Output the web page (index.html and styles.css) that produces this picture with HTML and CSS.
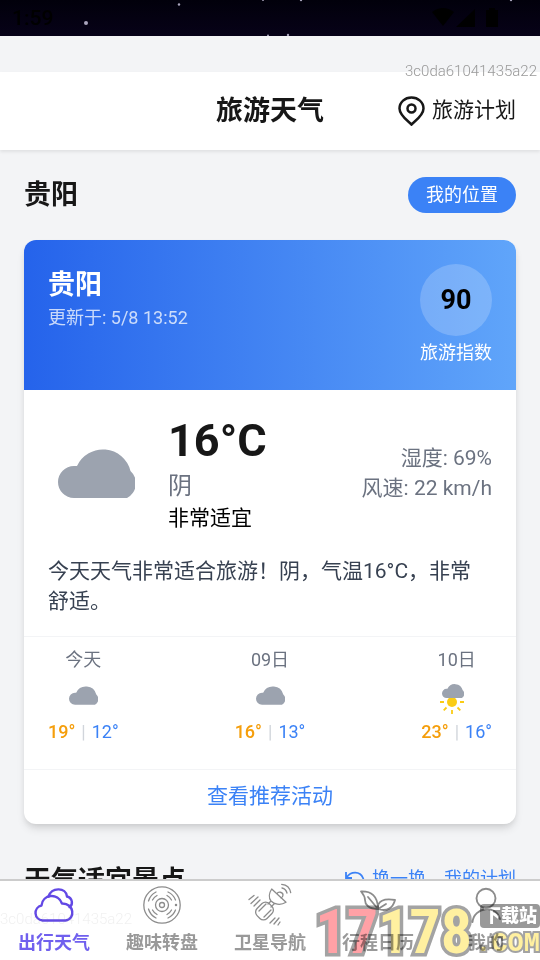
FILE: index.html
```html
<!DOCTYPE html>
<html lang="zh-CN">
<head>
<meta charset="utf-8">
<meta name="viewport" content="width=device-width, initial-scale=1">
<title>旅游天气</title>
<link rel="stylesheet" href="styles.css">
</head>
<body>
<svg class="defs" aria-hidden="true">
  <symbol id="cloud" viewBox="0 0 77 49"><path d="M16 49A16 16 0 0 1 16 17H19A28.500 28.500 0 0 1 72.500 22A16.600 16.600 0 0 1 69 49Z"/></symbol>
</svg>
<div class="app">
  <div class="status">
    <span>1:59</span>
    <svg class="stars" viewBox="0 0 540 36" preserveAspectRatio="none" aria-hidden="true">
      <g fill="#aaa5bd"><circle cx="86" cy="23" r="2"/><circle cx="179" cy="4.500" r="1.200"/><circle cx="263" cy="0" r="1"/><circle cx="301" cy="0" r="1.200"/><circle cx="511" cy="0" r="1.200"/><circle cx="288" cy="35" r="1.200"/><circle cx="268" cy="35.500" r="1"/></g>
    </svg>
    <svg class="signals" width="68" height="22" viewBox="0 0 68 22" aria-hidden="true"><path d="M0 5Q11-3 22 5L11 19ZM24 20L43 2V20ZM54 3H57V1H63V3H66V20H54Z"/></svg>
  </div>
  <header class="topbar">
    <h1>旅游天气</h1>
    <a class="plan" href="#plan">
      <svg width="27" height="30" viewBox="0 0 27 30" fill="none" stroke="#171717" stroke-width="2.500" aria-hidden="true"><path d="M13.500 28.500C10 25 1.500 19.500 1.500 12.500C1.500 6 7 1.500 13.500 1.500S25.500 6 25.500 12.500C25.500 19.500 17 25 13.500 28.500Z"/><circle cx="13.500" cy="12.500" r="4"/></svg>
      <span>旅游计划</span>
    </a>
    <span class="trace">3c0da61041435a22</span>
  </header>
  <main>
    <div class="row place">
      <h2>贵阳</h2>
      <button class="locate" type="button">我的位置</button>
    </div>
    <article class="card">
      <div class="hero">
        <div>
          <h3>贵阳</h3>
          <p class="updated">更新于: 5/8 13:52</p>
        </div>
        <div class="index">
          <strong>90</strong>
          <span>旅游指数</span>
        </div>
      </div>
      <div class="today">
        <div class="now">
          <div class="now-icon"><svg width="77" height="49" aria-hidden="true"><use href="#cloud"/></svg></div>
          <div class="reading">
            <strong>16°C</strong>
            <span class="sky">阴</span>
            <span class="comfort">非常适宜</span>
          </div>
          <div class="facts"><span>湿度: 69%</span><span>风速: 22 km/h</span></div>
        </div>
        <p class="advice">今天天气非常适合旅游！阴，气温16°C，非常舒适。</p>
      </div>
      <ul class="forecast">
        <li><span class="day">今天</span><span class="mini"><svg width="29" height="19" aria-hidden="true"><use href="#cloud"/></svg></span><span class="temps"><b>19°</b><i>|</i><em>12°</em></span></li>
        <li><span class="day">09日</span><span class="mini"><svg width="29" height="19" aria-hidden="true"><use href="#cloud"/></svg></span><span class="temps"><b>16°</b><i>|</i><em>13°</em></span></li>
        <li><span class="day">10日</span><span class="mini"><svg width="36" height="40" viewBox="0 0 36 40" aria-hidden="true"><circle cx="13" cy="26" r="5" fill="#facc15"/><path d="M1 26h4M21 26h4M13 34v4M7.500 31.500l-2.800 2.800M18.500 31.500l2.800 2.800" stroke="#facc15" stroke-width="1.800"/><use href="#cloud" x="3" y="8" width="22" height="14"/></svg></span><span class="temps"><b>23°</b><i>|</i><em>16°</em></span></li>
      </ul>
      <a class="activities" href="#activities">查看推荐活动</a>
    </article>
    <div class="row spots">
      <h2>天气适宜景点</h2>
      <div class="links">
        <a href="#refresh"><svg width="20" height="20" viewBox="0 0 20 20" fill="none" stroke="currentColor" stroke-width="1.800" aria-hidden="true"><path d="M1 3V9H7M1.500 8.500C6 2 15 2 18 9A8 8 0 0 1 3 15"/></svg><span>换一换</span></a>
        <a href="#plan">我的计划</a>
      </div>
    </div>
  </main>
  <nav class="tabs">
    <a class="active" href="#weather">
      <svg viewBox="0 0 48 48" stroke-width="2.400"><path d="M12.500 39.500A7.600 7.600 0 0 1 11.500 24.500C12.500 13 28 11.500 32 22.500C44 22 46 38 35.500 39.500Z"/><path d="M18.500 15.500C22 5.500 36 6.500 37 15.500C42.500 17 43.500 23.500 39.500 26"/></svg>
      <span>出行天气</span>
    </a>
    <a href="#wheel">
      <svg viewBox="0 0 48 48" stroke-width="1.300"><circle cx="24" cy="24" r="18.200"/><circle cx="24" cy="24" r="6.500"/><circle cx="24" cy="24" r="2.500"/><circle cx="38" cy="24" r=".6"/><path d="M14.500 19A11 11 0 0 1 19 14.500M29 14.500A11 11 0 0 1 33.500 19M33.500 29A11 11 0 0 1 29 33.500M19 33.500A11 11 0 0 1 14.500 29M10.500 20A14.500 14.500 0 0 1 18 11M30 11A14.500 14.500 0 0 1 37.500 19M37.500 29A14.500 14.500 0 0 1 30 37M18 37A14.500 14.500 0 0 1 10.500 28"/></svg>
      <span>趣味转盘</span>
    </a>
    <a href="#satellite">
      <svg viewBox="0 0 48 48" stroke-width="1.300"><path d="M25.700 8L40 21.300C34 25 28 23 25 20C22.500 17 23 12 25.700 8ZM31 13C32 10 37 11 37 14Q37 16 35 17M35.700 3.300Q43.500 4 44.700 11.700M36 7Q40 8 41 12M22 23L25 20M25 26L28 23"/><rect x="11.500" y="21.500" width="14" height="17" rx="5" transform="rotate(45 18.500 30)"/><path d="M13 30L20 23M18 36L25 29M3 18.500L8 14.500M5 22.500L12 16M8 25L14 19M24 42L29 37M28 43L33 37M32 44L34 41"/></svg>
      <span>卫星导航</span>
    </a>
    <a href="#calendar">
      <svg viewBox="0 0 48 48" stroke-width="1.800"><path d="M24 28C14 28 11 23 11 19C11 15 9 13 7 10.500C17 10 24 15 24 28ZM14 16L24 28C23 20 30 17 41 19C39 27 33 31 24 28M24 28L32 23"/></svg>
      <span>行程日历</span>
    </a>
    <a href="#me">
      <svg viewBox="0 0 48 48" stroke-width="1.900"><circle cx="24" cy="17.300" r="9.500"/><path d="M10.500 41C12 26 34 23 38 38"/></svg>
      <span>我的</span>
    </a>
    <span class="trace-low">3c0da61041435a22</span>
    <div class="brand" aria-hidden="true">
      <span class="digits"><span>17</span>178</span>
      <span class="side"><span class="badge">下载站</span><span class="com">.COM</span></span>
    </div>
  </nav>
</div>
</body>
</html>
```
FILE: styles.css
```css
* { box-sizing: border-box; margin: 0; padding: 0; }
body {
  font-family: Roboto, "Noto Sans CJK SC", sans-serif;
  font-size: 18px;
  color: #171717;
  background: #f3f4f6;
}
a { color: inherit; text-decoration: none; }
.defs { position: absolute; width: 0; height: 0; }
.app { display: flex; flex-direction: column; height: 100vh; overflow: hidden; }

.status {
  position: relative;
  flex: none;
  display: flex;
  justify-content: space-between;
  align-items: center;
  height: 36px;
  padding: 0 40px 0 12px;
  font-size: 21px;
  font-weight: 500;
  color: #000;
  background: linear-gradient(#01000b, #070218);
}
.stars { position: absolute; inset: 0; width: 100%; height: 100%; }

.topbar {
  position: relative;
  flex: none;
  display: grid;
  grid-template-columns: 1fr auto 1fr;
  align-items: center;
  height: 78px;
  margin-top: 36px;
  padding: 0 24px;
  background: #fff;
  box-shadow: 0 2px 3px rgba(0, 0, 0, .08);
}
h1, h2, h3 { font-size: 27px; line-height: 42px; font-weight: 700; }
h1 { grid-column: 2; }
.plan { display: flex; align-items: center; justify-content: flex-end; gap: 7px; font-size: 21px; }
.plan span { padding-bottom: 6px; }
.trace { position: absolute; top: -10px; right: 3px; font-size: 15px; font-weight: 300; line-height: 18px; color: #999; }

main { flex: 1; min-height: 0; padding: 24px; overflow: hidden; }
.row { display: flex; justify-content: space-between; align-items: center; }
.locate {
  height: 36px;
  padding: 0 18px 4px;
  border: 0;
  border-radius: 18px;
  font: inherit;
  color: #fff;
  background: #3b82f6;
}
.card {
  margin-top: 24px;
  border-radius: 12px;
  overflow: hidden;
  background: #fff;
  box-shadow: 0 6px 9px -1px rgba(0, 0, 0, .1), 0 3px 6px -2px rgba(0, 0, 0, .1);
}
.hero {
  display: flex;
  justify-content: space-between;
  height: 150px;
  padding: 24px;
  color: #fff;
  background: linear-gradient(90deg, #2563eb, #60a5fa);
}
.updated { line-height: 24px; color: rgba(255, 255, 255, .75); }
.index { display: flex; flex-direction: column; align-items: center; line-height: 34px; }
.index strong {
  width: 72px;
  height: 72px;
  border-radius: 50%;
  font-size: 27px;
  line-height: 72px;
  text-align: center;
  color: #000;
  background: rgba(255, 255, 255, .2);
}

.today { padding: 24px 24px 20px; }
.now { display: flex; align-items: center; gap: 24px; }
.now-icon { display: flex; justify-content: center; width: 96px; }
.now-icon, .mini { fill: #9ca3af; }
.reading { display: flex; flex-direction: column; }
.reading strong { font-size: 45px; line-height: 54px; }
.sky { font-size: 24px; line-height: 36px; color: #6b7280; }
.comfort { font-size: 21px; line-height: 28px; color: #000; }
.facts {
  display: flex;
  flex-direction: column;
  margin-left: auto;
  font-size: 21px;
  line-height: 30px;
  text-align: right;
  color: #6b7280;
}
.advice { margin-top: 24px; font-size: 21px; line-height: 30px; color: #374151; }

.forecast {
  display: flex;
  justify-content: space-between;
  padding: 9px 24px 24px;
  border-top: 1px solid #f3f4f6;
  list-style: none;
  line-height: 27px;
}
.forecast li { display: flex; flex-direction: column; align-items: center; }
.day { color: #6b7280; }
.mini { display: flex; align-items: center; height: 45px; }
.temps { display: flex; gap: 6px; }
.temps b { font-weight: 500; color: #f59e0b; }
.temps i { font-style: normal; color: #d1d5db; }
.temps em { font-style: normal; color: #3b82f6; }
.activities {
  display: block;
  padding-bottom: 2px;
  border-top: 1px solid #f3f4f6;
  font-size: 21px;
  line-height: 52px;
  text-align: center;
  color: #3b82f6;
}
.spots { margin-top: 36px; }
.links { display: flex; gap: 18px; line-height: 24px; padding-bottom: 4px; color: #3b82f6; }
.links a { display: flex; align-items: center; gap: 7px; }

.tabs {
  position: relative;
  flex: none;
  display: grid;
  grid-template-columns: repeat(5, 1fr);
  height: 81px;
  border-top: 2px solid #ccc;
  font-weight: 700;
  color: #999;
  background: #fff;
}
.tabs a { display: flex; flex-direction: column; align-items: center; line-height: 28px; }
.tabs svg {
  width: 48px;
  height: 48px;
  fill: none;
  stroke: #8c8c8c;
  stroke-linecap: round;
  stroke-linejoin: round;
}
.tabs .active { color: #7060ee; }
.tabs .active svg { stroke: #6248e5; }
.trace-low { position: absolute; left: 0; top: 29px; font-size: 15px; font-weight: 300; line-height: 18px; color: rgba(128, 128, 128, .12); }

.brand {
  position: absolute;
  right: 0;
  bottom: 0;
  display: flex;
  align-items: flex-end;
  mix-blend-mode: multiply;
  color: #fff0a0;
  -webkit-text-stroke: 7px #a3a3a3;
  paint-order: stroke fill;
}
.digits { font: 700 62px/56px "Liberation Sans Narrow", "Roboto Condensed", sans-serif; }
.digits span { color: #ffa1a6; }
.side { display: flex; flex-direction: column; align-items: flex-end; width: 68px; }
.badge {
  padding: 0 3px;
  border-radius: 4px;
  font-size: 18px;
  font-weight: 900;
  line-height: 24px;
  color: #fff;
  background: #999;
  -webkit-text-stroke: 0;
}
.com { font: 700 27px/32px "Liberation Mono", monospace; -webkit-text-stroke: 4px #a3a3a3; }
```
